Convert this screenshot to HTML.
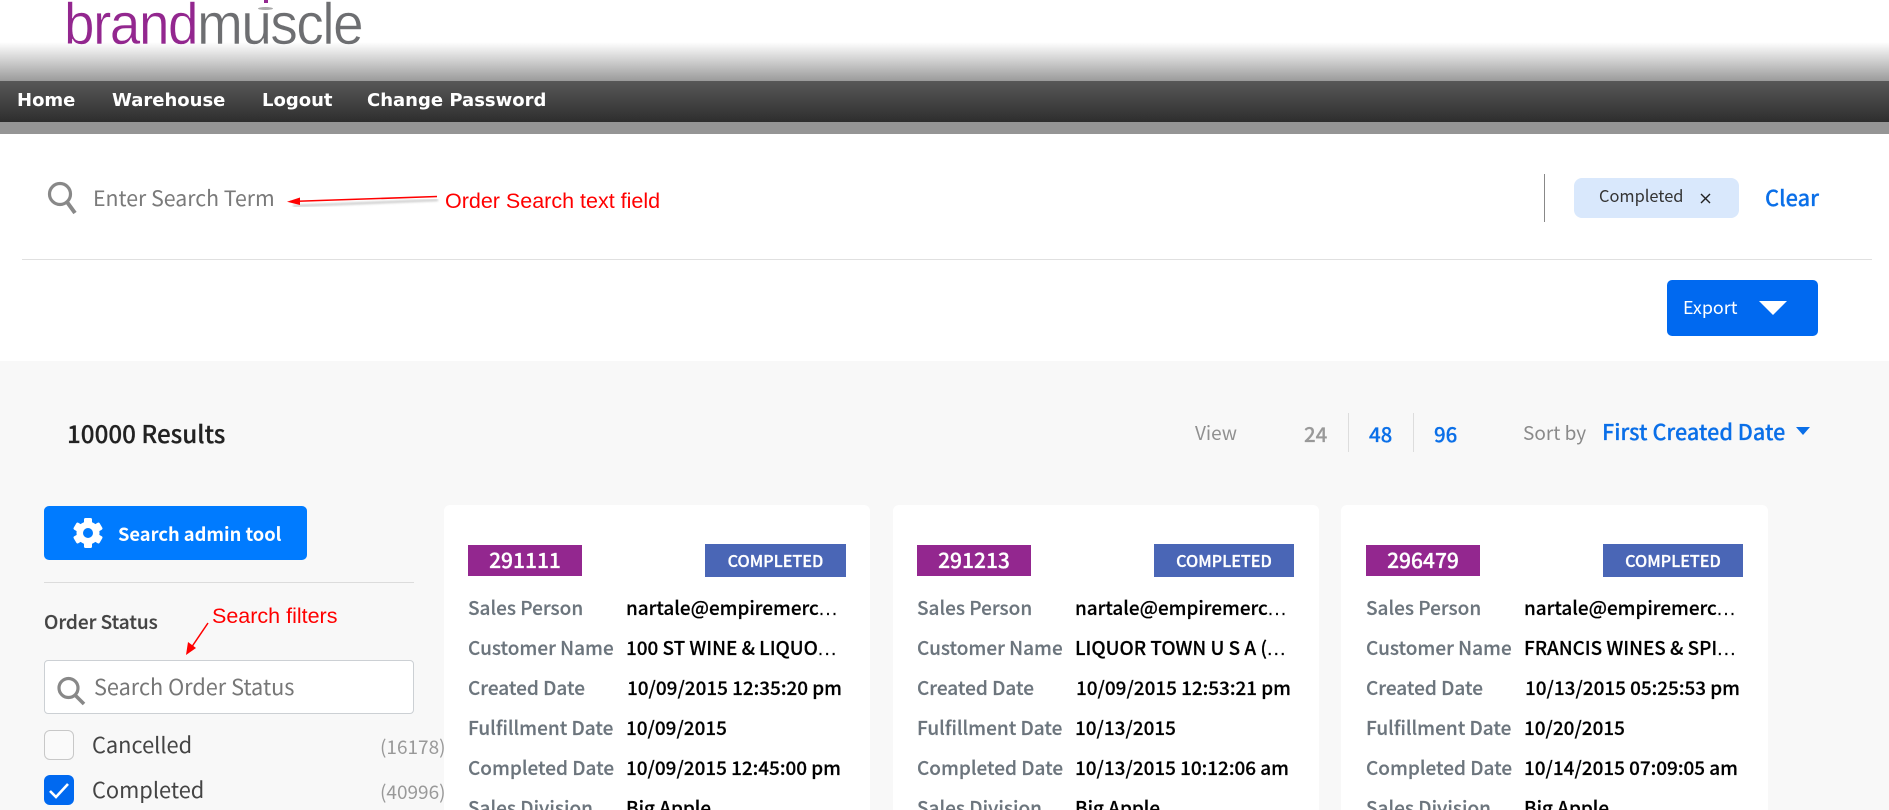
<!DOCTYPE html>
<html><head><meta charset="utf-8"><title>Order Search</title>
<style>
*{box-sizing:border-box}
html,body{margin:0;padding:0;width:1889px;height:810px;overflow:hidden;background:#fff}
body{position:relative;font-family:"Noto Sans CJK JP","Liberation Sans",sans-serif}
.a{position:absolute;white-space:nowrap}
.bx{position:absolute}
.s{font-weight:500;-webkit-text-stroke:.2px currentColor}
.red{font-family:"Liberation Sans",Arial,sans-serif;color:#f00;font-size:21.5px;line-height:24px}
.nav{font-family:"DejaVu Sans",sans-serif;font-weight:700;color:#fff;font-size:18px;line-height:24px;top:89px}
.l{position:absolute;white-space:nowrap;color:#6c757d;font-size:19px;font-weight:500;line-height:26px;-webkit-text-stroke:.2px currentColor}
.v{position:absolute;white-space:nowrap;color:#000;font-size:18.9px;font-weight:500;line-height:26px;-webkit-text-stroke:.2px currentColor}
.id{position:absolute;top:545px;width:114px;height:31px;background:#93278f;color:#fff;font-size:21px;font-weight:500;line-height:31px;text-align:center;-webkit-text-stroke:.3px currentColor}
.st{position:absolute;top:544px;height:33px;width:141px;background:#4a66b6;color:#fff;font-size:16.2px;font-weight:500;line-height:33px;text-align:center;-webkit-text-stroke:.3px currentColor}
.card{position:absolute;top:505px;width:426px;height:320px;background:#fff;border-radius:6px}
.e{font-family:"Liberation Sans",sans-serif;letter-spacing:1.3px}
</style></head><body>
<div class="bx" style="left:0;top:42px;width:1889px;height:39px;background:linear-gradient(#fff,#9b9b9b)"></div>
<div class="a" style="left:64px;top:-17px;font-family:'Liberation Sans',sans-serif;font-size:58px;line-height:84px;letter-spacing:-1.5px;color:#93278f;transform:scaleX(.945);transform-origin:0 0;-webkit-text-stroke:.5px #fff">brand<span style="color:#6d6e71">muscle</span></div>
<div class="bx" style="left:258px;top:7px;width:15px;height:3px;border-radius:50%;background:#aaa"></div>
<div class="bx" style="left:264px;top:0;width:4px;height:3px;background:#93278f"></div>
<div class="bx" style="left:0;top:81px;width:1889px;height:41px;background:linear-gradient(#585858,#2e2e2e)"></div>
<div class="bx" style="left:0;top:122px;width:1889px;height:12px;background:#959595"></div>
<div class="a nav" style="left:17px">Home</div>
<div class="a nav" style="left:112px">Warehouse</div>
<div class="a nav" style="left:262px">Logout</div>
<div class="a nav" style="left:367px">Change Password</div>

<svg class="bx" style="left:46px;top:180px" width="32" height="38" viewBox="0 0 32 38"><circle cx="14" cy="14" r="10.5" fill="none" stroke="#888" stroke-width="3.2"/><path d="M21 22l8 11" stroke="#888" stroke-width="4" fill="none"/></svg>
<div class="a" style="left:93px;top:183px;font-size:21.3px;line-height:30px;color:#7a7a7a">Enter Search Term</div>
<svg class="bx" style="left:280px;top:188px" width="165" height="24" viewBox="0 0 165 24"><defs><filter id="b"><feGaussianBlur stdDeviation="1"/></filter></defs><path d="M12 15L157 9" stroke="#888" stroke-width="2" opacity=".5" transform="translate(1 3)" filter="url(#b)"/><path d="M10 13.500L157 8.500" stroke="#f00" stroke-width="1.600" fill="none"/><path d="M7 13.700L20 9.500L20 17z" fill="#f00"/></svg>
<div class="a red" style="left:445px;top:189px">Order Search text field</div>

<div class="bx" style="left:1544px;top:174px;width:1px;height:48px;background:#888"></div>
<div class="bx" style="left:1574px;top:178px;width:165px;height:40px;background:#d9e8fc;border-radius:8px"></div>
<div class="a" style="left:1599px;top:182px;font-size:16.4px;line-height:26px;color:#333">Completed</div>
<svg class="bx" style="left:1699px;top:192px" width="13" height="13" viewBox="0 0 13 13"><path d="M2 2l9 9M11 2l-9 9" stroke="#222" stroke-width="1.400"/></svg>
<div class="a s" style="left:1765px;top:182px;font-size:21.8px;line-height:32px;color:#0a6fe8">Clear</div>
<div class="bx" style="left:22px;top:259px;width:1850px;height:1px;background:#e0e0e0"></div>
<div class="bx" style="left:1667px;top:280px;width:151px;height:56px;background:#0069f0;border-radius:5px"></div>
<div class="a" style="left:1683px;top:293px;font-size:17.900px;line-height:28px;color:#fff">Export</div>
<svg class="bx" style="left:1759px;top:301px" width="28" height="14" viewBox="0 0 28 14"><path d="M0 0H28L14 14z" fill="#fff"/></svg>

<div class="bx" style="left:0;top:361px;width:1889px;height:449px;background:#f8f8f8"></div>
<div class="a s" style="left:67px;top:415px;font-size:24.200px;line-height:36px;color:#222">10000 Results</div>
<div class="a" style="left:1195px;top:418px;font-size:19px;line-height:30px;color:#909090">View</div>
<div class="a s" style="left:1304px;top:418px;font-size:20.500px;line-height:30px;color:#999">24</div>
<div class="bx" style="left:1348px;top:413px;width:1px;height:39px;background:#ddd"></div>
<div class="a s" style="left:1369px;top:418px;font-size:20.500px;line-height:30px;color:#0a6fe8">48</div>
<div class="bx" style="left:1413px;top:413px;width:1px;height:39px;background:#ddd"></div>
<div class="a s" style="left:1434px;top:418px;font-size:20.500px;line-height:30px;color:#0a6fe8">96</div>
<div class="a" style="left:1523px;top:418px;font-size:19px;line-height:30px;color:#8a8a8a">Sort by</div>
<div class="a s" style="left:1602px;top:416px;font-size:21.600px;line-height:32px;color:#0a6fe8">First Created Date</div>
<svg class="bx" style="left:1796px;top:427px" width="14" height="8" viewBox="0 0 14 8"><path d="M0 0H14L7 8z" fill="#0a6fe8"/></svg>

<div class="bx" style="left:44px;top:506px;width:263px;height:54px;background:#007bff;border-radius:5px"></div>
<svg class="bx" style="left:72px;top:517px" width="32" height="32" viewBox="0 0 32 32"><g fill="#fff"><circle cx="16" cy="16" r="11.500"/><rect x="12" y="1" width="8" height="30" rx="1.500"/><rect x="12" y="1" width="8" height="30" rx="1.500" transform="rotate(60 16 16)"/><rect x="12" y="1" width="8" height="30" rx="1.500" transform="rotate(120 16 16)"/></g><circle cx="16" cy="16" r="5" fill="#007bff"/></svg>
<div class="a" style="left:118px;top:519px;font-size:18.300px;line-height:30px;font-weight:700;color:#fff">Search admin tool</div>
<div class="bx" style="left:44px;top:582px;width:370px;height:1px;background:#dcdcdc"></div>
<div class="a s" style="left:44px;top:608px;font-size:19px;line-height:28px;color:#444">Order Status</div>
<div class="a red" style="left:212px;top:604px">Search filters</div>
<svg class="bx" style="left:180px;top:615px" width="34" height="46" viewBox="0 0 34 46"><path d="M28 8L9 36" stroke="#f00" stroke-width="1.500" fill="none"/><path d="M6 40L8 27L16 33z" fill="#f00"/></svg>
<div class="bx" style="left:44px;top:660px;width:370px;height:54px;background:#fff;border:1px solid #ccd0d4;border-radius:4px"></div>
<svg class="bx" style="left:55px;top:675px" width="32" height="32" viewBox="0 0 32 32"><circle cx="13.500" cy="13" r="9.500" fill="none" stroke="#888" stroke-width="3.200"/><path d="M20 20l9 9" stroke="#888" stroke-width="3.600" fill="none"/></svg>
<div class="a" style="left:94px;top:671px;font-size:21.700px;line-height:32px;color:#777">Search Order Status</div>
<div class="bx" style="left:44px;top:730px;width:30px;height:30px;background:#fafafa;border:1px solid #c8c8c8;border-radius:6px"></div>
<div class="a" style="left:92px;top:729px;font-size:21.800px;line-height:32px;color:#444">Cancelled</div>
<div class="a" style="left:380px;top:732px;font-size:19px;line-height:30px;color:#999">(16178)</div>
<div class="bx" style="left:44px;top:775px;width:30px;height:30px;background:#0069f0;border-radius:6px"></div>
<svg class="bx" style="left:44px;top:775px" width="30" height="30" viewBox="0 0 30 30"><path d="M6 16l6 6L24 9" stroke="#fff" stroke-width="2.600" fill="none"/></svg>
<div class="a" style="left:92px;top:774px;font-size:21.800px;line-height:32px;color:#444">Completed</div>
<div class="a" style="left:380px;top:777px;font-size:19px;line-height:30px;color:#999">(40996)</div>

<div class="card" style="left:444px"></div>
<div class="card" style="left:893px"></div>
<div class="card" style="left:1341px;width:427px"></div>

<div class="id" style="left:468px">291111</div><div class="st" style="left:705px">COMPLETED</div>
<div class="l" style="left:468px;top:595px">Sales Person</div><div class="v" style="left:626px;top:595px">nartale@empiremerc<span class="e">...</span></div>
<div class="l" style="left:468px;top:635px">Customer Name</div><div class="v" style="left:626px;top:635px">100 ST WINE &amp; LIQUO<span class="e">...</span></div>
<div class="l" style="left:468px;top:675px">Created Date</div><div class="v" style="left:627px;top:675px">10/09/2015 12:35:20 pm</div>
<div class="l" style="left:468px;top:715px">Fulfillment Date</div><div class="v" style="left:626px;top:715px">10/09/2015</div>
<div class="l" style="left:468px;top:755px">Completed Date</div><div class="v" style="left:626px;top:755px">10/09/2015 12:45:00 pm</div>
<div class="l" style="left:468px;top:795px">Sales Division</div><div class="v" style="left:626px;top:795px">Big Apple</div>

<div class="id" style="left:917px">291213</div><div class="st" style="left:1154px;width:140px">COMPLETED</div>
<div class="l" style="left:917px;top:595px">Sales Person</div><div class="v" style="left:1075px;top:595px">nartale@empiremerc<span class="e">...</span></div>
<div class="l" style="left:917px;top:635px">Customer Name</div><div class="v" style="left:1075px;top:635px">LIQUOR TOWN U S A (<span class="e">...</span></div>
<div class="l" style="left:917px;top:675px">Created Date</div><div class="v" style="left:1076px;top:675px">10/09/2015 12:53:21 pm</div>
<div class="l" style="left:917px;top:715px">Fulfillment Date</div><div class="v" style="left:1075px;top:715px">10/13/2015</div>
<div class="l" style="left:917px;top:755px">Completed Date</div><div class="v" style="left:1075px;top:755px">10/13/2015 10:12:06 am</div>
<div class="l" style="left:917px;top:795px">Sales Division</div><div class="v" style="left:1075px;top:795px">Big Apple</div>

<div class="id" style="left:1366px">296479</div><div class="st" style="left:1603px;width:140px">COMPLETED</div>
<div class="l" style="left:1366px;top:595px">Sales Person</div><div class="v" style="left:1524px;top:595px">nartale@empiremerc<span class="e">...</span></div>
<div class="l" style="left:1366px;top:635px">Customer Name</div><div class="v" style="left:1524px;top:635px">FRANCIS WINES &amp; SPI<span class="e">...</span></div>
<div class="l" style="left:1366px;top:675px">Created Date</div><div class="v" style="left:1525px;top:675px">10/13/2015 05:25:53 pm</div>
<div class="l" style="left:1366px;top:715px">Fulfillment Date</div><div class="v" style="left:1524px;top:715px">10/20/2015</div>
<div class="l" style="left:1366px;top:755px">Completed Date</div><div class="v" style="left:1524px;top:755px">10/14/2015 07:09:05 am</div>
<div class="l" style="left:1366px;top:795px">Sales Division</div><div class="v" style="left:1524px;top:795px">Big Apple</div>
</body></html>
